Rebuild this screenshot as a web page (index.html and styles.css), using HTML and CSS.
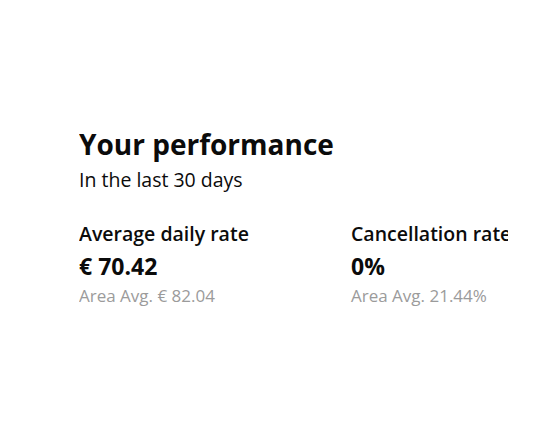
FILE: index.html
```html
<!DOCTYPE html>
<html lang="en">
<head>
<meta charset="utf-8">
<link rel="stylesheet" href="styles.css">
</head>
<body>
<section class="perf">
  <h2 class="title">Your performance</h2>
  <p class="subtitle">In the last 30 days</p>
  <div class="metrics">
    <div class="metric">
      <div class="label">Average daily rate</div>
      <div class="value">€ 70.42</div>
      <div class="avg">Area Avg. € 82.04</div>
    </div>
    <div class="metric">
      <div class="label">Cancellation rate</div>
      <div class="value">0%</div>
      <div class="avg">Area Avg. 21.44%</div>
    </div>
  </div>
</section>
</body>
</html>
```
FILE: styles.css
```css
html, body {
  margin: 0;
  padding: 0;
  background: #ffffff;
}
body {
  font-family: "Open Sans", "Noto Sans", "DejaVu Sans", sans-serif;
  color: #0b0b0b;
}
.perf {
  width: 429px;
  margin: 0 0 0 79px;
  padding-top: 125px;
  overflow: hidden;
}
.title {
  margin: 0;
  font-size: 28px;
  font-weight: 700;
  line-height: 38px;
  letter-spacing: 0;
}
.subtitle {
  margin: 4px 0 0;
  font-size: 19.5px;
  line-height: 26px;
}
.metrics {
  display: flex;
  margin-top: 28px;
}
.metric {
  flex: 0 0 272px;
  white-space: nowrap;
}
.label {
  font-size: 19.5px;
  line-height: 26px;
  font-weight: 600;
}
.value {
  margin-top: 4px;
  font-size: 23px;
  line-height: 30px;
  font-weight: 700;
}
.avg {
  margin-top: 4px;
  font-size: 17px;
  line-height: 22px;
  color: #9b9b9b;
}
```
